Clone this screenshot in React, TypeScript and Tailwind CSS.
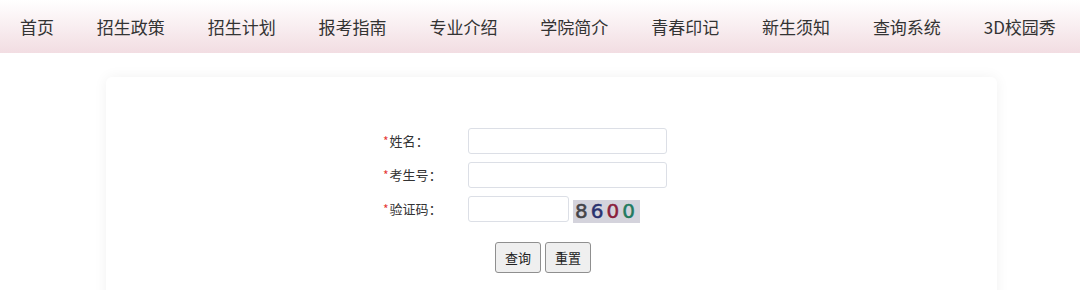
import React from 'react';

const navItems = ['首页', '招生政策', '招生计划', '报考指南', '专业介绍', '学院简介', '青春印记', '新生须知', '查询系统', '3D校园秀'];

const font = "font-['Microsoft_YaHei','Noto_Sans_CJK_SC',sans-serif]";

function Field({ label, wide = true, children }: { label: string; wide?: boolean; children?: React.ReactNode }) {
  return (
    <div className="flex items-center h-[26px]">
      <div className="w-[85px] text-[13px] text-[#333] flex items-center">
        <span className="text-[#e53935] text-[12px] mr-[1px]">*</span>
        {label}：
      </div>
      <input
        className={`${wide ? 'w-[199px]' : 'w-[101px]'} h-[26px] border border-[#dcdfe6] rounded-[3px] bg-white outline-none px-2 text-[13px]`}
      />
      {children}
    </div>
  );
}

export default function App() {
  return (
    <div className={`w-[1080px] h-[290px] bg-white overflow-hidden ${font}`}>
      {/* Top Nav */}
      <div className="h-[53px] bg-gradient-to-b from-white to-[#f2dde2] flex items-center justify-between pl-[20px] pr-[24px]">
        {navItems.map((n) => (
          <span key={n} className="text-[17px] text-[#333] leading-none">{n}</span>
        ))}
      </div>

      {/* Card */}
      <div className="ml-[106px] mt-[24px] w-[891px] h-[240px] bg-white rounded-[6px] shadow-[0_0_14px_rgba(0,0,0,0.06)] pt-[51px]">
        <div className="ml-[277px] flex flex-col gap-[8px]">
          <Field label="姓名" />
          <Field label="考生号" />
          <Field label="验证码" wide={false}>
            {/* captcha image */}
            <div className="ml-[4px] mt-[4px] w-[67px] h-[23px] bg-[#d4d3dc] flex items-center justify-center text-[20px] tracking-[3px] leading-none [-webkit-text-stroke:0.5px_currentColor] font-['DejaVu_Sans',sans-serif]">
              <span className="text-[#444448]">8</span>
              <span className="text-[#2a3270]">6</span>
              <span className="text-[#8a1f3c]">0</span>
              <span className="text-[#237a60]">0</span>
            </div>
          </Field>
        </div>
        <div className="flex gap-[4px] ml-[389px] mt-[20px]">
          <button className="w-[46px] h-[31px] bg-[#efefef] border border-[#8f8f8f] rounded-[3px] text-[13px] text-[#222]">查询</button>
          <button className="w-[46px] h-[31px] bg-[#efefef] border border-[#8f8f8f] rounded-[3px] text-[13px] text-[#222]">重置</button>
        </div>
      </div>
    </div>
  );
}
